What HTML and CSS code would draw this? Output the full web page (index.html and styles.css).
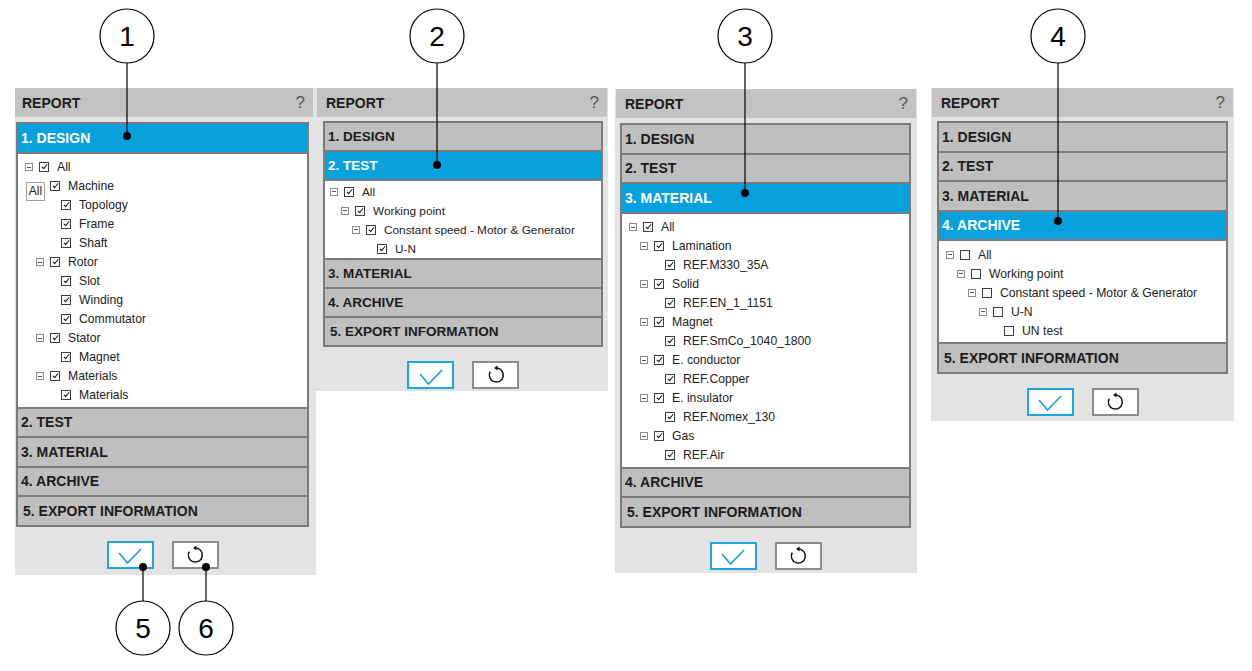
FILE: index.html
```html
<!DOCTYPE html>
<html lang="en">
<head>
    <meta charset="UTF-8">
    <meta name="viewport" content="width=device-width, initial-scale=1.0">
    <title>Report panels</title>
    <link rel="stylesheet" href="styles.css">
</head>
<body>

<div class="page">

    <!-- 1. Design open -->
    <div class="panel panel-1">
        <div class="report"><span>REPORT</span><span class="help">?</span></div>
        <div class="body">
            <div class="acc">
                <div class="sec active">1. DESIGN</div>
                <div class="tree">
                    <div class="row l0"><span class="tg"></span><span class="cb on"></span>All</div>
                    <div class="row l1"><span class="tg"></span><span class="cb on"></span>Machine<span class="tip">All</span></div>
                    <div class="row l2"><span class="tg none"></span><span class="cb on"></span>Topology</div>
                    <div class="row l2"><span class="tg none"></span><span class="cb on"></span>Frame</div>
                    <div class="row l2"><span class="tg none"></span><span class="cb on"></span>Shaft</div>
                    <div class="row l1"><span class="tg"></span><span class="cb on"></span>Rotor</div>
                    <div class="row l2"><span class="tg none"></span><span class="cb on"></span>Slot</div>
                    <div class="row l2"><span class="tg none"></span><span class="cb on"></span>Winding</div>
                    <div class="row l2"><span class="tg none"></span><span class="cb on"></span>Commutator</div>
                    <div class="row l1"><span class="tg"></span><span class="cb on"></span>Stator</div>
                    <div class="row l2"><span class="tg none"></span><span class="cb on"></span>Magnet</div>
                    <div class="row l1"><span class="tg"></span><span class="cb on"></span>Materials</div>
                    <div class="row l2"><span class="tg none"></span><span class="cb on"></span>Materials</div>
                </div>
                <div class="sec">2. TEST</div>
                <div class="sec">3. MATERIAL</div>
                <div class="sec">4. ARCHIVE</div>
                <div class="sec last">5. EXPORT INFORMATION</div>
            </div>
            <div class="actions">
                <button class="btn btn-ok"><svg width="24" height="16" viewBox="0 0 24 16"><path d="M1 5 L9.5 15 L23 1" fill="none" stroke="#14a3dc" stroke-width="1.6"/></svg></button>
                <button class="btn btn-reset"><svg width="20" height="20" viewBox="0 0 20 20"><path d="M4.2 6.6 A7 7 0 1 0 10.5 3" fill="none" stroke="#111" stroke-width="1.5"/><path d="M8 3 L11.5 0.6 L11.5 5.4 Z" fill="#111"/></svg></button>
            </div>
        </div>
    </div>

    <!-- 2. Test open -->
    <div class="panel panel-2">
        <div class="report"><span>REPORT</span><span class="help">?</span></div>
        <div class="body">
            <div class="acc">
                <div class="sec">1. DESIGN</div>
                <div class="sec active">2. TEST</div>
                <div class="tree">
                    <div class="row l0"><span class="tg"></span><span class="cb on"></span>All</div>
                    <div class="row l1"><span class="tg"></span><span class="cb on"></span>Working point</div>
                    <div class="row l2"><span class="tg"></span><span class="cb on"></span>Constant speed - Motor &amp; Generator</div>
                    <div class="row l3"><span class="tg none"></span><span class="cb on"></span>U-N</div>
                </div>
                <div class="sec">3. MATERIAL</div>
                <div class="sec">4. ARCHIVE</div>
                <div class="sec last">5. EXPORT INFORMATION</div>
            </div>
            <div class="actions">
                <button class="btn btn-ok"><svg width="24" height="16" viewBox="0 0 24 16"><path d="M1 5 L9.5 15 L23 1" fill="none" stroke="#14a3dc" stroke-width="1.6"/></svg></button>
                <button class="btn btn-reset"><svg width="20" height="20" viewBox="0 0 20 20"><path d="M4.2 6.6 A7 7 0 1 0 10.5 3" fill="none" stroke="#111" stroke-width="1.5"/><path d="M8 3 L11.5 0.6 L11.5 5.4 Z" fill="#111"/></svg></button>
            </div>
        </div>
    </div>

    <!-- 3. Material open -->
    <div class="panel panel-3">
        <div class="report"><span>REPORT</span><span class="help">?</span></div>
        <div class="body">
            <div class="acc">
                <div class="sec">1. DESIGN</div>
                <div class="sec">2. TEST</div>
                <div class="sec active">3. MATERIAL</div>
                <div class="tree">
                    <div class="row l0"><span class="tg"></span><span class="cb on"></span>All</div>
                    <div class="row l1"><span class="tg"></span><span class="cb on"></span>Lamination</div>
                    <div class="row l2"><span class="tg none"></span><span class="cb on"></span>REF.M330_35A</div>
                    <div class="row l1"><span class="tg"></span><span class="cb on"></span>Solid</div>
                    <div class="row l2"><span class="tg none"></span><span class="cb on"></span>REF.EN_1_1151</div>
                    <div class="row l1"><span class="tg"></span><span class="cb on"></span>Magnet</div>
                    <div class="row l2"><span class="tg none"></span><span class="cb on"></span>REF.SmCo_1040_1800</div>
                    <div class="row l1"><span class="tg"></span><span class="cb on"></span>E. conductor</div>
                    <div class="row l2"><span class="tg none"></span><span class="cb on"></span>REF.Copper</div>
                    <div class="row l1"><span class="tg"></span><span class="cb on"></span>E. insulator</div>
                    <div class="row l2"><span class="tg none"></span><span class="cb on"></span>REF.Nomex_130</div>
                    <div class="row l1"><span class="tg"></span><span class="cb on"></span>Gas</div>
                    <div class="row l2"><span class="tg none"></span><span class="cb on"></span>REF.Air</div>
                </div>
                <div class="sec">4. ARCHIVE</div>
                <div class="sec last">5. EXPORT INFORMATION</div>
            </div>
            <div class="actions">
                <button class="btn btn-ok"><svg width="24" height="16" viewBox="0 0 24 16"><path d="M1 5 L9.5 15 L23 1" fill="none" stroke="#14a3dc" stroke-width="1.6"/></svg></button>
                <button class="btn btn-reset"><svg width="20" height="20" viewBox="0 0 20 20"><path d="M4.2 6.6 A7 7 0 1 0 10.5 3" fill="none" stroke="#111" stroke-width="1.5"/><path d="M8 3 L11.5 0.6 L11.5 5.4 Z" fill="#111"/></svg></button>
            </div>
        </div>
    </div>

    <!-- 4. Archive open -->
    <div class="panel panel-4">
        <div class="report"><span>REPORT</span><span class="help">?</span></div>
        <div class="body">
            <div class="acc">
                <div class="sec">1. DESIGN</div>
                <div class="sec">2. TEST</div>
                <div class="sec">3. MATERIAL</div>
                <div class="sec active">4. ARCHIVE</div>
                <div class="tree">
                    <div class="row l0"><span class="tg"></span><span class="cb"></span>All</div>
                    <div class="row l1"><span class="tg"></span><span class="cb"></span>Working point</div>
                    <div class="row l2"><span class="tg"></span><span class="cb"></span>Constant speed - Motor &amp; Generator</div>
                    <div class="row l3"><span class="tg"></span><span class="cb"></span>U-N</div>
                    <div class="row l4"><span class="tg none"></span><span class="cb"></span>UN test</div>
                </div>
                <div class="sec last">5. EXPORT INFORMATION</div>
            </div>
            <div class="actions">
                <button class="btn btn-ok"><svg width="24" height="16" viewBox="0 0 24 16"><path d="M1 5 L9.5 15 L23 1" fill="none" stroke="#14a3dc" stroke-width="1.6"/></svg></button>
                <button class="btn btn-reset"><svg width="20" height="20" viewBox="0 0 20 20"><path d="M4.2 6.6 A7 7 0 1 0 10.5 3" fill="none" stroke="#111" stroke-width="1.5"/><path d="M8 3 L11.5 0.6 L11.5 5.4 Z" fill="#111"/></svg></button>
            </div>
        </div>
    </div>

    <!-- numbered callouts -->
    <svg class="callouts" width="1252" height="671" viewBox="0 0 1252 671">
        <g stroke="#000" stroke-width="1.2">
            <line x1="127" y1="63" x2="127" y2="136"/>
            <line x1="437" y1="63" x2="437" y2="165"/>
            <line x1="745" y1="63" x2="745" y2="193"/>
            <line x1="1058" y1="63" x2="1058" y2="221"/>
            <line x1="143" y1="567" x2="143" y2="601"/>
            <line x1="206" y1="567" x2="206" y2="601"/>
        </g>
        <g fill="#000">
            <circle cx="127" cy="136" r="4"/>
            <circle cx="437" cy="165" r="4"/>
            <circle cx="745" cy="193" r="4"/>
            <circle cx="1058" cy="221" r="4"/>
            <circle cx="143" cy="567" r="4"/>
            <circle cx="206" cy="567" r="4"/>
        </g>
        <g fill="#fff" stroke="#000" stroke-width="1.2">
            <circle cx="127" cy="36" r="27"/>
            <circle cx="437" cy="36" r="27"/>
            <circle cx="745" cy="36" r="27"/>
            <circle cx="1058" cy="36" r="27"/>
            <circle cx="143" cy="628" r="27"/>
            <circle cx="206" cy="628" r="27"/>
        </g>
        <g class="num" text-anchor="middle">
            <text x="127" y="46">1</text>
            <text x="437" y="46">2</text>
            <text x="745" y="46">3</text>
            <text x="1058" y="46">4</text>
            <text x="143" y="638">5</text>
            <text x="206" y="638">6</text>
        </g>
    </svg>

</div>

</body>
</html>
```
FILE: styles.css
```css
body {
    margin: 0;
    font-family: "Liberation Sans", Arial, sans-serif;
    background: #fff;
    color: #1c1c1c;
}
.page {
    position: relative;
    width: 1252px;
    height: 671px;
    box-sizing: border-box;
    padding: 88px 0 0 15px;
    display: flex;
    align-items: flex-start;
}

/* panel */
.panel {
    background: #e3e3e3;
    padding-bottom: 4px;
}
.panel-1 { width: 301px; padding-bottom: 6px; }
.panel-2 { width: 292px; padding-bottom: 2px; }
.panel-3 { width: 302px; margin-left: 7px; margin-top: 1px; padding-bottom: 3px; }
.panel-4 { width: 303px; margin-left: 14px; padding-bottom: 5px; }

.report {
    height: 29px;
    margin: 0 1px;
    padding: 0 8px 0 9px;
    background: #c3c3c3;
    display: flex;
    align-items: center;
    justify-content: space-between;
    font-size: 14px;
    font-weight: bold;
}
.panel-1 .report { margin: 0 3px 0 0; padding-left: 7px; }
.help {
    font-weight: normal;
    font-size: 17px;
    color: #555;
}

.body {
    margin: 5px 6px 0 6px;
}
.panel-1 .body { margin: 5px 7px 0 1px; }
.panel-2 .body { margin: 4px 5px 0 7px; }
.panel-3 .body { margin-top: 5px; margin-left: 5px; }
.panel-4 .body { margin-top: 4px; }

/* accordion */
.acc {
    border: 2px solid #7b7b7b;
    background: #bfbfbf;
}
.acc > * + * {
    border-top: 2px solid #7b7b7b;
}
.sec {
    height: 27.5px;
    padding-left: 3px;
    display: flex;
    align-items: center;
    font-size: 14px;
    font-weight: bold;
    color: #1c1c1c;
}
.sec.last {
    padding-left: 5px;
}
.sec.active {
    background: #07a2de;
    color: #fff;
}
.panel-2 .sec {
    height: 27px;
    font-size: 13.5px;
}

/* tree */
.tree {
    background: #fff;
    padding: 4px 0 2px 7px;
    font-size: 12.2px;
    color: #222;
}
.panel-2 .tree {
    padding: 1px 0 0 5px;
    font-size: 11.8px;
}
.row {
    position: relative;
    height: 19px;
    display: flex;
    align-items: center;
}
.l1 { padding-left: 11px; }
.l2 { padding-left: 22px; }
.l3 { padding-left: 33px; }
.l4 { padding-left: 44px; }

.tg {
    position: relative;
    width: 8px;
    height: 8px;
    box-sizing: border-box;
    border: 1px solid #8c8c8c;
    margin-right: 6px;
    flex: none;
}
.tg::after {
    content: "";
    position: absolute;
    left: 1px;
    top: 2.5px;
    width: 4px;
    height: 1px;
    background: #555;
}
.tg.none {
    visibility: hidden;
}
.cb {
    position: relative;
    width: 10px;
    height: 10px;
    box-sizing: border-box;
    border: 1px solid #3c3c3c;
    margin-right: 8px;
    flex: none;
    background: #fff;
}
.cb.on::after {
    content: "";
    position: absolute;
    left: 2.6px;
    top: 0;
    width: 2.4px;
    height: 5px;
    border: solid #111;
    border-width: 0 1.8px 1.8px 0;
    transform: rotate(40deg);
}
.tip {
    position: absolute;
    left: 1px;
    top: 5px;
    width: 19px;
    height: 19px;
    box-sizing: border-box;
    border: 1px solid #a0a0a0;
    background: #fff;
    font-size: 12px;
    line-height: 17px;
    text-align: center;
}

/* buttons */
.actions {
    display: flex;
    justify-content: center;
    gap: 18px;
    margin-top: 14px;
}
.btn {
    width: 47px;
    height: 28px;
    box-sizing: border-box;
    padding: 0;
    background: #fff;
    border: 2px solid #8c8c8c;
    display: flex;
    align-items: center;
    justify-content: center;
    cursor: pointer;
}
.btn-ok {
    border-color: #1da6dc;
}
.btn-ok svg {
    margin-top: 3px;
}

/* callouts */
.callouts {
    position: absolute;
    left: 0;
    top: 0;
    pointer-events: none;
}
.num {
    font-family: "Liberation Sans", Arial, sans-serif;
    font-size: 28px;
    fill: #000;
}
```
